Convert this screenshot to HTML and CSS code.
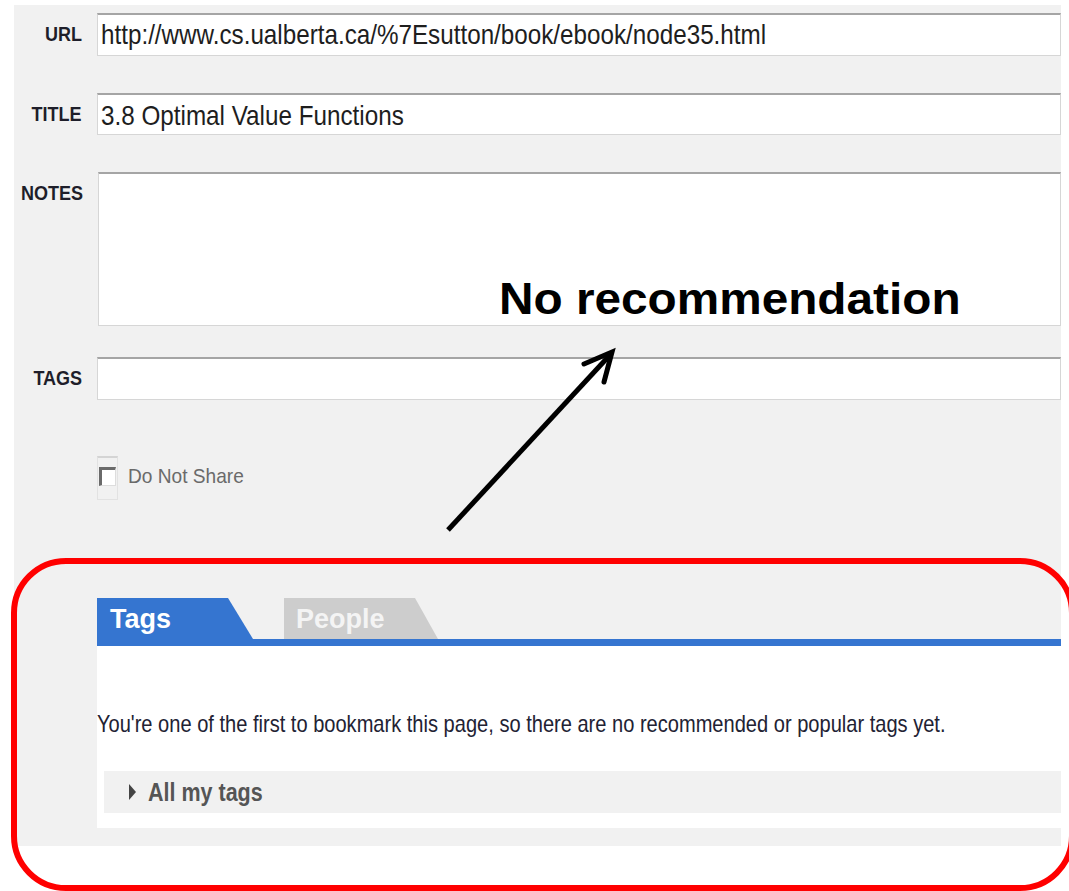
FILE: index.html
```html
<!DOCTYPE html>
<html lang="en">
<head>
<meta charset="utf-8">
<title>Save bookmark</title>
<link rel="stylesheet" href="styles.css">
</head>
<body>
<div class="page">
  <div class="row row-url">
    <label class="lbl"><span class="sq-lbl">URL</span></label>
    <div class="field field-url"><span class="sq sq-url">http://www.cs.ualberta.ca/%7Esutton/book/ebook/node35.html</span></div>
  </div>
  <div class="row row-title">
    <label class="lbl"><span class="sq-lbl">TITLE</span></label>
    <div class="field field-title"><span class="sq sq-title">3.8 Optimal Value Functions</span></div>
  </div>
  <div class="row row-notes">
    <label class="lbl lbl-top"><span class="sq-lbl">NOTES</span></label>
    <div class="field field-notes"></div>
  </div>
  <div class="row row-tags">
    <label class="lbl"><span class="sq-lbl">TAGS</span></label>
    <div class="field field-tags"></div>
  </div>

  <div class="share">
    <span class="check-frame"><span class="check"></span></span>
    <span class="share-text"><span class="sq sq-share">Do Not Share</span></span>
  </div>

  <div class="reco">
    <div class="tabs">
      <div class="tab tab-on">Tags</div>
      <div class="tab tab-off">People</div>
    </div>
    <div class="tab-panel">
      <p class="empty-note"><span class="sq sq-note">You're one of the first to bookmark this page, so there are no recommended or popular tags yet.</span></p>
      <div class="all-tags"><span class="caret"></span><span class="all-tags-text"><span class="sq sq-all">All my tags</span></span></div>
    </div>
  </div>
</div>

<svg class="callout" width="1069" height="891" viewBox="0 0 1069 891">
  <rect x="14" y="561" width="1058" height="327" rx="52" ry="52" fill="none" stroke="#ff0000" stroke-width="6"/>
  <line x1="448" y1="530" x2="609" y2="356" stroke="#000" stroke-width="5"/>
  <polyline points="584,364 612,352 604,382" fill="none" stroke="#000" stroke-width="5" stroke-linejoin="miter" stroke-linecap="round"/>
</svg>
<div class="callout-text">No recommendation</div>
</body>
</html>
```

FILE: styles.css
```css
html, body {
  margin: 0;
  padding: 0;
  background: #ffffff;
  overflow: hidden;
}

body {
  position: relative;
  width: 1069px;
  height: 891px;
  font-family: "Liberation Sans", Arial, sans-serif;
  color: #1e1e1e;
}

/* narrow rendering of the form's type */
.sq {
  display: inline-block;
  transform-origin: 0 50%;
  white-space: nowrap;
}

.sq-url { transform: scaleX(0.865); }
.sq-title { transform: scaleX(0.866); }
.sq-share { transform: scaleX(0.91); }
.sq-note { transform: scaleX(0.836); }
.sq-all { transform: scaleX(0.86); }

.sq-lbl {
  display: inline-block;
  transform: scaleX(0.9);
  transform-origin: 100% 50%;
}

.page {
  margin: 5px 0 0 14px;
  width: 1047px;
  height: 841px;
  box-sizing: border-box;
  padding-top: 8px;
  background: #f1f1f1;
}

/* form rows: label column + field */
.row {
  display: flex;
  align-items: center;
  column-gap: 15px;
}

.row-url { margin-bottom: 37px; }
.row-title { margin-bottom: 37px; }
.row-notes { margin-bottom: 31px; align-items: flex-start; }

.lbl {
  flex: 0 0 68px;
  text-align: right;
  font-weight: bold;
  font-size: 20px;
  color: #1e1e2a;
  white-space: nowrap;
}

.lbl-top { padding-top: 10px; }

.field {
  flex: 1;
  box-sizing: border-box;
  background: #ffffff;
  border: 1px solid #d6d6d6;
  border-top: 2px solid #a5a5a5;
  padding-left: 3px;
  white-space: nowrap;
  overflow: hidden;
}

.field-url {
  height: 43px;
  line-height: 40px;
  font-size: 28px;
}

.field-title {
  height: 42px;
  line-height: 41px;
  font-size: 28px;
}

.field-notes { height: 154px; }
.field-tags { height: 43px; }

/* share checkbox */
.share {
  display: flex;
  align-items: center;
  margin: 56px 0 0 83px;
  column-gap: 10px;
}

.check-frame {
  display: flex;
  align-items: center;
  width: 21px;
  height: 44px;
  box-sizing: border-box;
  border: 1px solid #e2e2e2;
  border-top: 2px solid #d4d4d4;
}

.check {
  display: block;
  width: 13px;
  height: 15px;
  margin-left: 1px;
  margin-top: -4px;
  background: #ffffff;
  border-top: 3px solid #6a6a6a;
  border-left: 3px solid #6a6a6a;
  border-right: 1px solid #dddddd;
  border-bottom: 1px solid #dddddd;
}

.share-text {
  font-size: 21px;
  color: #6a6a6a;
  margin-top: -4px;
}

/* recommendation tabs */
.reco {
  margin: 98px 0 0 83px;
}

.tabs {
  display: flex;
  column-gap: 31px;
  height: 41px;
  border-bottom: 7px solid #3575d0;
}

.tab {
  box-sizing: border-box;
  height: 41px;
  font-weight: bold;
  font-size: 27px;
  line-height: 43px;
  color: #ffffff;
}

.tab-on {
  width: 156px;
  padding-left: 13px;
  background: #3575d0;
  clip-path: polygon(0 0, 131px 0, 100% 100%, 0 100%);
}

.tab-off {
  width: 154px;
  padding-left: 12px;
  background: #cdcdcd;
  color: #f4f4f4;
  clip-path: polygon(0 0, 131px 0, 100% 100%, 0 100%);
}

.tab-panel {
  background: #ffffff;
  height: 182px;
  box-sizing: border-box;
  padding: 64px 0 15px 0;
}

.empty-note {
  margin: 0;
  font-size: 24px;
  line-height: 28px;
  color: #222233;
  white-space: nowrap;
}

.all-tags {
  display: flex;
  align-items: center;
  margin: 33px 0 0 7px;
  height: 42px;
  background: #f1f1f1;
  padding-left: 25px;
  column-gap: 12px;
}

.caret {
  width: 0;
  height: 0;
  border-top: 8px solid transparent;
  border-bottom: 8px solid transparent;
  border-left: 7px solid #444444;
}

.all-tags-text {
  font-weight: bold;
  font-size: 25px;
  color: #555555;
}

/* annotation layer drawn over the form */
.callout {
  position: absolute;
  top: 0;
  left: 0;
  pointer-events: none;
}

.callout-text {
  position: absolute;
  left: 499px;
  top: 274px;
  font-weight: bold;
  font-size: 44px;
  line-height: 50px;
  color: #000000;
  white-space: nowrap;
  transform: scaleX(1.085);
  transform-origin: 0 50%;
}
```
